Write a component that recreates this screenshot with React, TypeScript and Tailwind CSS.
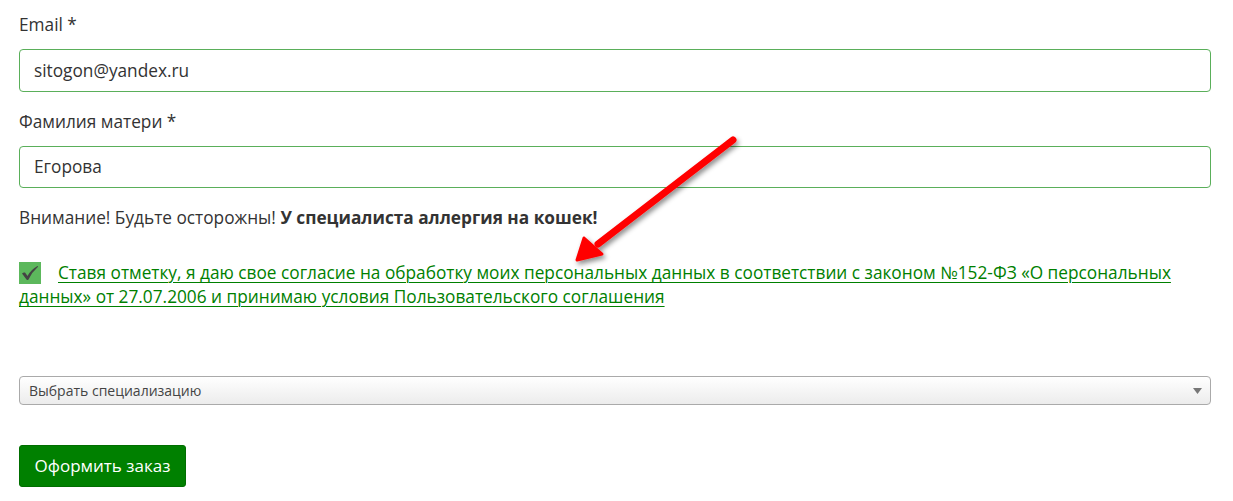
import React from "react";

export default function App() {
  return (
    <div
      className="relative w-[1233px] h-[501px] bg-white overflow-hidden text-[#333] text-[17.25px] leading-[24px]"
      style={{ fontFamily: '"Open Sans", "Noto Sans", sans-serif' }}
    >
      <div className="flex flex-col pl-[19px] pr-[22px] pt-[13px]">
        <label className="block">Email *</label>
        <div className="mt-[12px] h-[43px] border border-[#5aaf5a] rounded-[4px] flex items-center px-[14px]">
          sitogon@yandex.ru
        </div>
        <label className="block mt-[18px]">Фамилия матери *</label>
        <div className="mt-[12px] h-[42px] border border-[#5aaf5a] rounded-[4px] flex items-center px-[14px]">
          Егорова
        </div>
        <p className="mt-[18px]">
          Внимание! Будьте осторожны! <b className="font-bold">У специалиста аллергия на кошек!</b>
        </p>
        <div className="mt-[31px] relative">
          <span className="absolute left-0 top-[1px] w-[22px] h-[22px] bg-[#5cb85c] flex items-center justify-center">
            <svg width="18" height="16" viewBox="0 0 18 16">
              <path
                d="M1 8.5 Q2.5 7 4 7.5 L6.5 11 Q10 4.5 16.5 1 Q17.5 1 16.8 2 Q11 7 7.5 14.5 Q6.5 15.5 5.5 14.5 Z"
                fill="#444"
              />
            </svg>
          </span>
          <p className="indent-[39px]">
            <a
              href="#"
              className="text-[#008000] underline underline-offset-[3px] decoration-[1px]"
            >
              Ставя отметку, я даю свое согласие на обработку моих персональных данных в соответствии с законом №152-ФЗ «О персональных данных» от 27.07.2006 и принимаю условия Пользовательского соглашения
            </a>
          </p>
        </div>
        <div className="mt-[67px] h-[29px] border border-[#aaa] rounded-[4px] bg-gradient-to-b from-white to-[#ececec] flex items-center justify-between pl-[9px] pr-[8px] text-[14px] text-[#444]">
          <span>Выбрать специализацию</span>
          <svg width="9" height="6" viewBox="0 0 9 6">
            <path d="M0 0 L9 0 L4.5 6 Z" fill="#777" />
          </svg>
        </div>
        <div className="mt-[40px]">
          <button className="h-[42px] w-[167px] bg-[#008000] text-white rounded-[3px] text-[17px] border border-[#006e00]">
            Оформить заказ
          </button>
        </div>
      </div>
      <svg
        className="absolute left-0 top-0 pointer-events-none"
        width="1233"
        height="501"
        viewBox="0 0 1233 501"
      >
        <defs>
          <filter id="sh" x="-20%" y="-20%" width="140%" height="140%">
            <feDropShadow dx="2" dy="3" stdDeviation="2.5" floodColor="#000" floodOpacity="0.45" />
          </filter>
        </defs>
        <g filter="url(#sh)">
          <line x1="733" y1="140" x2="598" y2="244" stroke="#ff0000" strokeWidth="7" strokeLinecap="round" />
          <path d="M577 260 L584 238 L602 254 Z" fill="#ff0000" stroke="#ff0000" strokeWidth="3" strokeLinejoin="round" />
        </g>
      </svg>
    </div>
  );
}
